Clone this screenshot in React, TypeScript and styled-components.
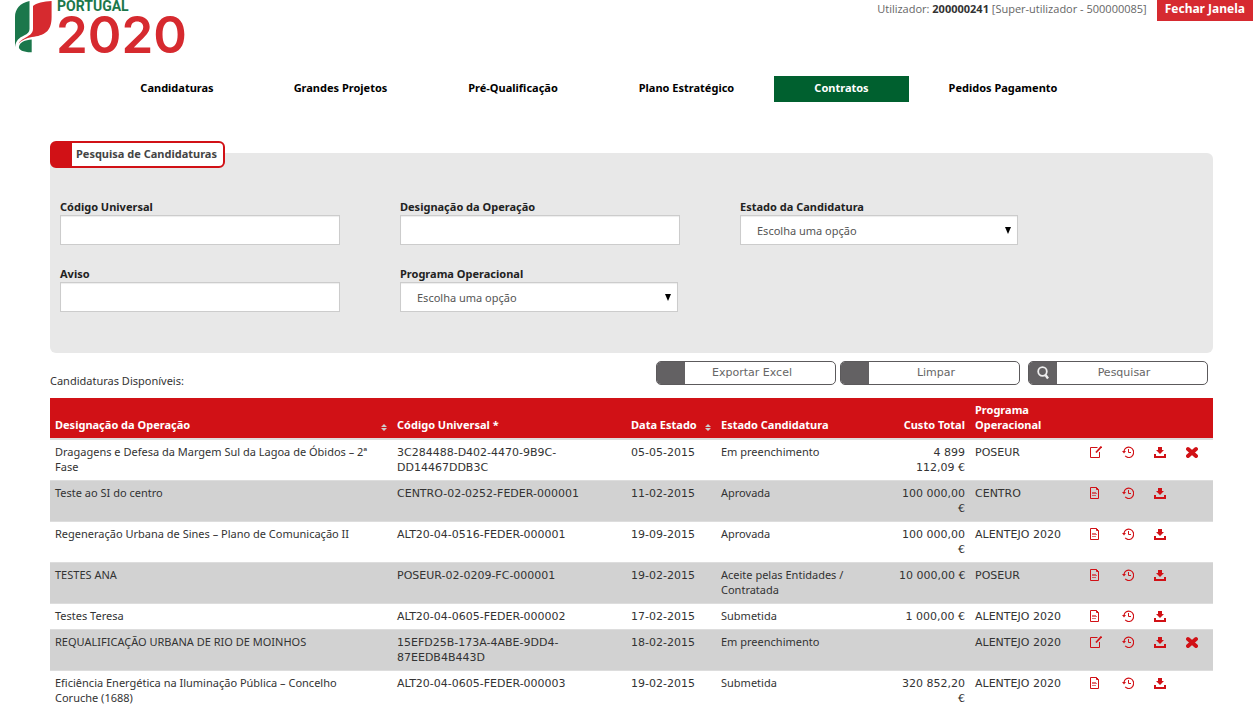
import React from 'react';
import styled, { createGlobalStyle } from 'styled-components';

const textFont = '"Noto Sans", "Open Sans", sans-serif';
const dataFont = '"DejaVu Sans", Verdana, sans-serif';
const red = '#d11116';

const GlobalStyle = createGlobalStyle`
  *, *::before, *::after { box-sizing: border-box; }
  body {
    margin: 0;
    background: #fff;
    color: #333;
    font: 11px/15px ${textFont};
  }
  button, input, select { font: inherit; color: inherit; }
`;

const Header = styled.header`
  display: flex;
  justify-content: space-between;
  align-items: flex-start;
  height: 76px;
  padding: 0 2px 0 15px;
`;

const Brand = styled.a`
  display: flex;
  gap: 4px;
  text-decoration: none;
`;

const BrandWords = styled.span`
  display: flex;
  flex-direction: column;
`;

const BrandName = styled.span`
  padding-left: 1px;
  font: 700 14px/13px Roboto, sans-serif;
  color: #1b774b;
`;

const BrandYear = styled.span`
  font: 600 51px/44px Inter, sans-serif;
  color: #d62a2f;
`;

const Session = styled.div`
  display: flex;
  align-items: flex-start;
  gap: 10px;
  font-family: "Open Sans", sans-serif;
  line-height: 18px;
  color: #666;

  strong { color: #333; }
`;

const CloseButton = styled.button`
  height: 21px;
  padding: 0 8px 3px;
  border: 0;
  background: #d62a30;
  color: #fff;
  font: 700 12px/18px "Noto Sans", sans-serif;
  cursor: pointer;
`;

const Nav = styled.nav`
  display: grid;
  grid-template-columns: 154fr 173fr 172fr 175fr 135fr 188fr;
  margin: 0 158px 0 100px;
`;

const NavLink = styled.a<{ $active?: boolean }>`
  padding: 3px 0 5px;
  text-align: center;
  text-decoration: none;
  font-weight: 700;
  line-height: 18px;
  color: ${p => (p.$active ? '#fff' : '#000')};
  background: ${p => (p.$active ? '#00602f' : 'transparent')};
`;

const Main = styled.main`
  padding: 51px 42px 0 50px;
`;

const SearchPanel = styled.form`
  padding: 0 0 41px;
  border-radius: 6px;
  background: #e8e8e8;
`;

const PanelTitle = styled.h2`
  display: inline-block;
  margin: -12px 0 31px;
  padding: 3px 6px 5px 4px;
  border: 2px solid ${red};
  border-left-width: 22px;
  border-radius: 6px;
  background: #fff;
  font-size: 11px;
  line-height: 15px;
  color: #444;
  vertical-align: top;
`;

const Fields = styled.div`
  display: grid;
  grid-template-columns: repeat(auto-fill, 280px);
  gap: 21px 60px;
  padding: 0 10px;
`;

const Label = styled.label`
  display: block;
  padding-bottom: 1px;
  font-weight: 700;
  color: #222;
`;

const TextInput = styled.input`
  display: block;
  width: 280px;
  height: 30px;
  padding: 6px 12px;
  border: 1px solid #ccc;
  background: #fff;
  box-shadow: inset 0 1px 1px rgba(0, 0, 0, 0.075);
`;

const SelectBox = styled.div`
  position: relative;
  width: 278px;

  &::after {
    content: '';
    position: absolute;
    top: 12px;
    right: 7px;
    border: 3px solid transparent;
    border-top: 7px solid #000;
    border-bottom: 0;
    pointer-events: none;
  }
`;

const Select = styled.select`
  display: block;
  width: 100%;
  height: 30px;
  padding: 0 16px;
  border: 1px solid #ccc;
  border-radius: 0;
  background: #fff;
  box-shadow: inset 0 1px 1px rgba(0, 0, 0, 0.075);
  appearance: none;
  color: #555;
`;

const Toolbar = styled.div`
  display: flex;
  align-items: flex-start;
  gap: 4px;
  padding: 8px 5px 13px 0;
`;

const ListTitle = styled.p`
  margin: 12px auto -3px 0;
`;

const ActionButton = styled.button<{ $spaced?: boolean }>`
  display: flex;
  width: 180px;
  height: 24px;
  margin-left: ${p => (p.$spaced ? '4px' : '0')};
  padding: 0;
  border: 1px solid #5c5a5c;
  border-radius: 5px;
  overflow: hidden;
  background: #fff;
  color: #666;
  font-family: ${dataFont};
  line-height: 22px;
  cursor: pointer;
`;

const ActionIcon = styled.span`
  display: flex;
  align-items: center;
  justify-content: center;
  flex: 0 0 28px;
  align-self: stretch;
  background: #636163;
`;

const ActionText = styled.span`
  flex: 1;
  padding-right: 16px;
  text-align: center;
`;

const Table = styled.table`
  width: 100%;
  table-layout: fixed;
  border-collapse: collapse;
`;

const Col = styled.col<{ $width?: number }>`
  width: ${p => (p.$width ? `${p.$width}px` : 'auto')};
`;

const HeadCell = styled.th<{ $right?: boolean }>`
  padding: 4px 5px 6px;
  border-bottom: 2px solid #ddd;
  background: ${red};
  color: #fff;
  text-align: ${p => (p.$right ? 'right' : 'left')};
  vertical-align: bottom;
`;

const SortHead = styled.span`
  display: flex;
  justify-content: space-between;
  align-items: flex-end;
`;

const Row = styled.tr`
  &:nth-child(even) { background: #d2d2d2; }
`;

const Cell = styled.td`
  padding: 4px 5px 6px;
  border-top: 1px solid #ddd;
  vertical-align: top;
`;

const DataCell = styled(Cell)<{ $right?: boolean }>`
  padding: 5px;
  font-family: ${dataFont};
  text-align: ${p => (p.$right ? 'right' : 'left')};
`;

const ActionsCell = styled(Cell)`
  padding: 4px 5px 5px;
`;

const RowActions = styled.div`
  display: flex;
  gap: 10px;
`;

const IconButton = styled.button`
  display: flex;
  align-items: center;
  justify-content: center;
  width: 22px;
  height: 16px;
  padding: 0;
  border: 0;
  background: none;
  color: ${red};
  cursor: pointer;
`;

const Emblem = () => (
  <svg width="37" height="54" viewBox="15 0 37 54" aria-hidden="true">
    <path fill="#1b774b" d="M29.500 1C20 3 15 9 15 17V47C16 40 19 38 24 35.500Q29.500 33 29.500 29Z" />
    <path fill="#d62a2f" d="M51.600 1C44 1.300 36 3 33 6V29C33 34 28 36 25 38Q20 40.500 18.500 43.500Q23 38.500 32 37C44 35.500 51.600 32 51.600 17Z" />
    <path fill="#1b774b" d="M31.700 39.500C25 40 20 42 19 46.500C18 50 24 52.500 31.700 52.300Z" />
  </svg>
);

const SearchIcon = () => (
  <svg width="14" height="14" viewBox="0 0 14 14" fill="none" stroke="#eee" aria-hidden="true">
    <circle cx="6.500" cy="5.500" r="4.300" strokeWidth="1.800" />
    <path d="M9.500 9l2.500 3.500" strokeWidth="2.400" />
  </svg>
);

const SortIcon = () => (
  <svg width="6" height="9" viewBox="0 0 6 9" fill="#ccc" aria-hidden="true">
    <path d="M0 4L3 1L6 4ZM0 5H6L3 8Z" />
  </svg>
);

const EditIcon = () => (
  <svg width="12" height="12" viewBox="0 0 12 12" fill="none" stroke="currentColor" aria-hidden="true">
    <path d="M7.500 1.500H.500V11.500H9.500V6" />
    <path d="M6 6.500L11.500 .500" strokeWidth="1.800" />
  </svg>
);

const FileIcon = () => (
  <svg width="12" height="12" viewBox="0 0 12 12" fill="none" stroke="currentColor" aria-hidden="true">
    <path d="M6.500 .500H.500V11.500H8.500V2.500Z" />
    <path d="M6.500 .500V2.500H8.500" />
    <path d="M2 5.500H6M2 6.500H7M2 8.500H6" strokeOpacity=".6" />
  </svg>
);

const HistoryIcon = () => (
  <svg width="12" height="12" viewBox="0 0 12 12" fill="none" stroke="currentColor" aria-hidden="true">
    <path d="M1.900 5.500A4.900 5.200 0 1 1 3.200 9.900" strokeWidth="1.200" />
    <path d="M6.500 3V6.500H9" />
    <path d="M0 5H4L2 7.500Z" fill="currentColor" stroke="none" />
  </svg>
);

const DownloadIcon = () => (
  <svg width="12" height="12" viewBox="0 0 12 12" fill="currentColor" aria-hidden="true">
    <path d="M4 1H8V4H10L6 8L2 4H4Z" />
    <path d="M0 8H2V10H10V8H12V12H0Z" />
  </svg>
);

const DeleteIcon = () => (
  <svg width="12" height="12" viewBox="0 0 12 12" stroke="currentColor" strokeWidth="4" strokeLinecap="round" aria-hidden="true">
    <path d="M2 3L10 10M10 3L2 10" />
  </svg>
);

const navItems = ['Candidaturas', 'Grandes Projetos', 'Pré-Qualificação', 'Plano Estratégico', 'Contratos', 'Pedidos Pagamento'];

interface Application {
  name: string;
  code: string;
  date: string;
  state: string;
  cost: string;
  program: string;
  draft?: boolean;
}

const applications: Application[] = [
  { name: 'Dragagens e Defesa da Margem Sul da Lagoa de Óbidos – 2ª Fase', code: '3C284488-D402-4470-9B9C-DD14467DDB3C', date: '05-05-2015', state: 'Em preenchimento', cost: '4 899 112,09\u00a0€', program: 'POSEUR', draft: true },
  { name: 'Teste ao SI do centro', code: 'CENTRO-02-0252-FEDER-000001', date: '11-02-2015', state: 'Aprovada', cost: '100\u00a0000,00 €', program: 'CENTRO' },
  { name: 'Regeneração Urbana de Sines – Plano de Comunicação II', code: 'ALT20-04-0516-FEDER-000001', date: '19-09-2015', state: 'Aprovada', cost: '100\u00a0000,00 €', program: 'ALENTEJO 2020' },
  { name: 'TESTES ANA', code: 'POSEUR-02-0209-FC-000001', date: '19-02-2015', state: 'Aceite pelas Entidades / Contratada', cost: '10\u00a0000,00\u00a0€', program: 'POSEUR' },
  { name: 'Testes Teresa', code: 'ALT20-04-0605-FEDER-000002', date: '17-02-2015', state: 'Submetida', cost: '1\u00a0000,00\u00a0€', program: 'ALENTEJO 2020' },
  { name: 'REQUALIFICAÇÃO URBANA DE RIO DE MOINHOS', code: '15EFD25B-173A-4ABE-9DD4-87EEDB4B443D', date: '18-02-2015', state: 'Em preenchimento', cost: '', program: 'ALENTEJO 2020', draft: true },
  { name: 'Eficiência Energética na Iluminação Pública – Concelho Coruche\u00a0(1688)', code: 'ALT20-04-0605-FEDER-000003', date: '19-02-2015', state: 'Submetida', cost: '320\u00a0852,20 €', program: 'ALENTEJO 2020' },
];

const TextField = ({ id, label }: { id: string; label: string }) => (
  <div>
    <Label htmlFor={id}>{label}</Label>
    <TextInput id={id} type="text" />
  </div>
);

const SelectField = ({ id, label }: { id: string; label: string }) => (
  <div>
    <Label htmlFor={id}>{label}</Label>
    <SelectBox>
      <Select id={id}>
        <option>Escolha uma opção</option>
      </Select>
    </SelectBox>
  </div>
);

export default function App() {
  return (
    <>
      <GlobalStyle />
      <Header>
        <Brand href="#">
          <Emblem />
          <BrandWords>
            <BrandName>PORTUGAL</BrandName>
            <BrandYear>2020</BrandYear>
          </BrandWords>
        </Brand>
        <Session>
          <span>Utilizador: <strong>200000241</strong> [Super-utilizador - 500000085]</span>
          <CloseButton type="button">Fechar Janela</CloseButton>
        </Session>
      </Header>
      <Nav>
        {navItems.map(item => (
          <NavLink key={item} href="#" $active={item === 'Contratos'}>{item}</NavLink>
        ))}
      </Nav>
      <Main>
        <SearchPanel>
          <PanelTitle>Pesquisa de Candidaturas</PanelTitle>
          <Fields>
            <TextField id="codigo" label="Código Universal" />
            <TextField id="designacao" label="Designação da Operação" />
            <SelectField id="estado" label="Estado da Candidatura" />
            <TextField id="aviso" label="Aviso" />
            <SelectField id="programa" label="Programa Operacional" />
          </Fields>
        </SearchPanel>
        <Toolbar>
          <ListTitle>Candidaturas Disponíveis:</ListTitle>
          <ActionButton type="button"><ActionIcon /><ActionText>Exportar Excel</ActionText></ActionButton>
          <ActionButton type="button"><ActionIcon /><ActionText>Limpar</ActionText></ActionButton>
          <ActionButton type="button" $spaced><ActionIcon><SearchIcon /></ActionIcon><ActionText>Pesquisar</ActionText></ActionButton>
        </Toolbar>
        <Table>
          <colgroup>
            <Col />
            <Col $width={234} />
            <Col $width={90} />
            <Col $width={178} />
            <Col $width={76} />
            <Col $width={110} />
            <Col $width={133} />
          </colgroup>
          <thead>
            <tr>
              <HeadCell><SortHead>Designação da Operação<SortIcon /></SortHead></HeadCell>
              <HeadCell>Código Universal *</HeadCell>
              <HeadCell><SortHead>Data Estado<SortIcon /></SortHead></HeadCell>
              <HeadCell>Estado Candidatura</HeadCell>
              <HeadCell $right>Custo Total</HeadCell>
              <HeadCell>Programa<br />Operacional</HeadCell>
              <HeadCell aria-label="Ações" />
            </tr>
          </thead>
          <tbody>
            {applications.map(item => (
              <Row key={item.code}>
                <Cell>{item.name}</Cell>
                <DataCell>{item.code}</DataCell>
                <DataCell>{item.date}</DataCell>
                <Cell>{item.state}</Cell>
                <DataCell $right>{item.cost}</DataCell>
                <DataCell>{item.program}</DataCell>
                <ActionsCell>
                  <RowActions>
                    <IconButton type="button" aria-label={item.draft ? 'Editar' : 'Consultar'}>
                      {item.draft ? <EditIcon /> : <FileIcon />}
                    </IconButton>
                    <IconButton type="button" aria-label="Histórico"><HistoryIcon /></IconButton>
                    <IconButton type="button" aria-label="Descarregar"><DownloadIcon /></IconButton>
                    {item.draft && <IconButton type="button" aria-label="Eliminar"><DeleteIcon /></IconButton>}
                  </RowActions>
                </ActionsCell>
              </Row>
            ))}
          </tbody>
        </Table>
      </Main>
    </>
  );
}
